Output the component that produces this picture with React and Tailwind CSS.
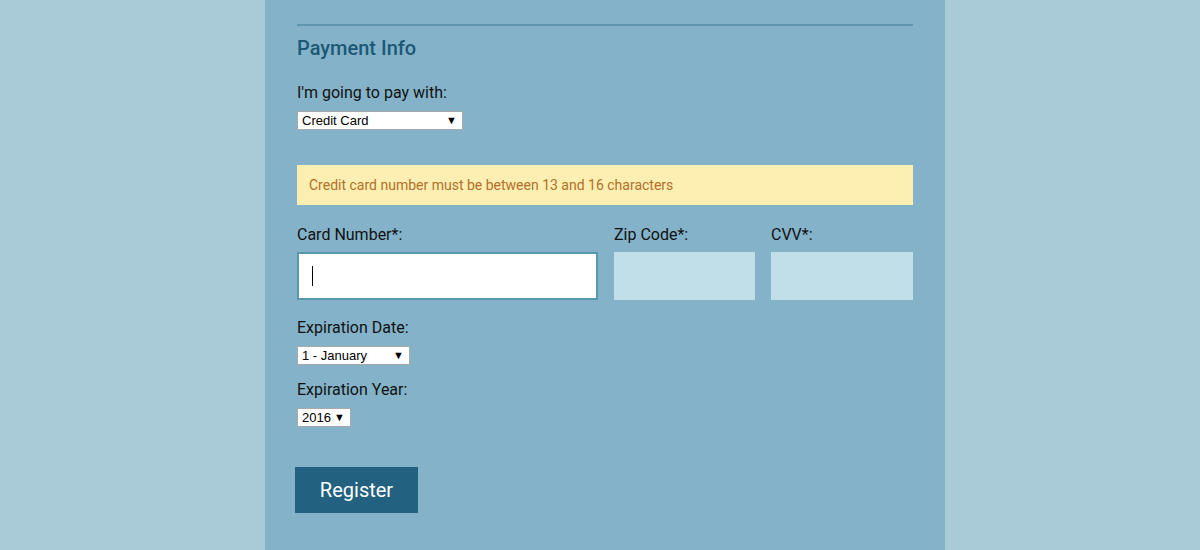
import React from "react";

const SelectBox = ({ value, width }) => (
  <div
    className={`flex h-[19px] items-center justify-between border border-[#a9a9a9] bg-white pl-[4px] pr-[5px] text-[13px] leading-none text-black ${width}`}
    style={{ fontFamily: "Arial, 'Liberation Sans', sans-serif" }}
  >
    <span>{value}</span>
    <span className="text-[11px]">▼</span>
  </div>
);

const App = () => {
  return (
    <div
      className="flex min-h-[550px] w-full justify-center bg-[#a9cad7] pl-[10px]"
      style={{ fontFamily: "Roboto, 'Noto Sans', sans-serif" }}
    >
      <div className="h-[550px] w-[680px] bg-[#84b3c9] px-[32px] pt-[24px]">
        <div className="border-t-2 border-[#5f95ae]" />
        <h2 className="mt-[10px] text-[20px] font-medium leading-[24px] text-[#1d5876]">
          Payment Info
        </h2>

        <label className="mt-[23px] block text-[16px] leading-[20px] text-[#111]">
          I'm going to pay with:
        </label>
        <div className="mt-[8px]">
          <SelectBox value="Credit Card" width="w-[166px]" />
        </div>

        <div className="mt-[35px] flex h-[40px] items-center bg-[#fdeeb1] px-[12px] text-[14px] text-[#b0702a]">
          Credit card number must be between 13 and 16 characters
        </div>

        <div className="mt-[20px] flex gap-[16px]">
          <div className="flex w-[301px] flex-col">
            <label className="text-[16px] leading-[20px] text-[#111]">Card Number*:</label>
            <div className="mt-[7px] flex h-[48px] items-center border-2 border-[#5a97b0] bg-white pl-[13px]">
              <span className="h-[20px] w-px bg-black" />
            </div>
          </div>
          <div className="flex w-[141px] flex-col">
            <label className="text-[16px] leading-[20px] text-[#111]">Zip Code*:</label>
            <div className="mt-[7px] h-[48px] bg-[#c1dfe9]" />
          </div>
          <div className="flex w-[142px] flex-col">
            <label className="text-[16px] leading-[20px] text-[#111]">CVV*:</label>
            <div className="mt-[7px] h-[48px] bg-[#c1dfe9]" />
          </div>
        </div>

        <label className="mt-[18px] block text-[16px] leading-[20px] text-[#111]">
          Expiration Date:
        </label>
        <div className="mt-[8px]">
          <SelectBox value="1 - January" width="w-[113px]" />
        </div>

        <label className="mt-[15px] block text-[16px] leading-[20px] text-[#111]">
          Expiration Year:
        </label>
        <div className="mt-[8px]">
          <SelectBox value="2016" width="w-[54px]" />
        </div>

        <button
          type="button"
          className="-ml-[2px] mt-[40px] h-[46px] w-[123px] bg-[#22617f] text-[20px] text-white"
        >
          Register
        </button>
      </div>
    </div>
  );
};

export default App;
